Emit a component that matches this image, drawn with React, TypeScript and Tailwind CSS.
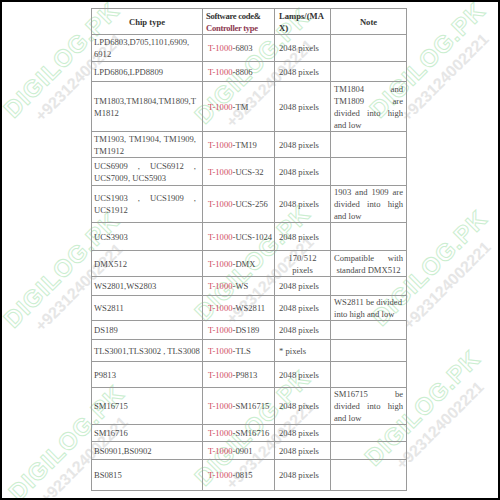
type Line = { t: string; j?: boolean; c?: boolean };

type Row = {
  h: string;
  chip: Line[];
  code: string;
  lamps: Line[];
  note?: Line[];
};

const px: Line[] = [{ t: "2048 pixels" }];

const rows: Row[] = [
  { h: "h-[27px]", chip: [{ t: "LPD6803,D705,1101,6909," }, { t: "6912" }], code: "6803", lamps: px },
  { h: "h-[20px]", chip: [{ t: "LPD6806,LPD8809" }], code: "8806", lamps: px },
  {
    h: "h-[50px]",
    chip: [{ t: "TM1803,TM1804,TM1809,T" }, { t: "M1812" }],
    code: "TM",
    lamps: px,
    note: [{ t: "TM1804 and", j: true }, { t: "TM1809 are", j: true }, { t: "divided into high", j: true }, { t: "and low" }],
  },
  { h: "h-[26px]", chip: [{ t: "TM1903, TM1904, TM1909,", j: true }, { t: "TM1912" }], code: "TM19", lamps: px },
  { h: "h-[28px]", chip: [{ t: "UCS6909 , UCS6912 ,", j: true }, { t: "UCS7009, UCS5903" }], code: "UCS-32", lamps: px },
  {
    h: "h-[37px]",
    chip: [{ t: "UCS1903 , UCS1909 ,", j: true }, { t: "UCS1912" }],
    code: "UCS-256",
    lamps: px,
    note: [{ t: "1903 and 1909 are", j: true }, { t: "divided into high", j: true }, { t: "and low" }],
  },
  { h: "h-[28px]", chip: [{ t: "UCS3903" }], code: "UCS-1024", lamps: px },
  {
    h: "h-[26px]",
    chip: [{ t: "DMX512" }],
    code: "DMX",
    lamps: [{ t: "170/512", c: true }, { t: "pixels", c: true }],
    note: [{ t: "Compatible with", j: true }, { t: "standard DMX512", c: true }],
  },
  { h: "h-[19px]", chip: [{ t: "WS2801,WS2803" }], code: "WS", lamps: px },
  {
    h: "h-[25px]",
    chip: [{ t: "WS2811" }],
    code: "WS2811",
    lamps: px,
    note: [{ t: "WS2811 be divided" }, { t: "into high and low" }],
  },
  { h: "h-[19px]", chip: [{ t: "DS189" }], code: "DS189", lamps: px },
  { h: "h-[22px]", chip: [{ t: "TLS3001,TLS3002 , TLS3008" }], code: "TLS", lamps: [{ t: "* pixels" }] },
  { h: "h-[26px]", chip: [{ t: "P9813" }], code: "P9813", lamps: px },
  {
    h: "h-[37px]",
    chip: [{ t: "SM16715" }],
    code: "SM16715",
    lamps: px,
    note: [{ t: "SM16715 be", j: true }, { t: "divided into high", j: true }, { t: "and low" }],
  },
  { h: "h-[17px]", chip: [{ t: "SM16716" }], code: "SM16716", lamps: px },
  { h: "h-[18px]", chip: [{ t: "BS0901,BS0902" }], code: "0901", lamps: px },
  { h: "h-[31px]", chip: [{ t: "BS0815" }], code: "0815", lamps: px },
];

function Lines({ lines }: { lines: Line[] }) {
  return (
    <>
      {lines.map((l, i) =>
        l.j ? (
          <div key={i} className="flex justify-between whitespace-nowrap">
            {l.t.split(" ").map((w, k) => (
              <span key={k}>{w}</span>
            ))}
          </div>
        ) : (
          <div key={i} className={l.c ? "text-center whitespace-nowrap" : "whitespace-nowrap"}>
            {l.t}
          </div>
        )
      )}
    </>
  );
}

// faint shop watermark, tiled 3x3 over the sheet
const marks = [
  { x: "left-[-33px]", y: "top-[42px]" },
  { x: "left-[158px]", y: "top-[48px]" },
  { x: "left-[333px]", y: "top-[42px]" },
  { x: "left-[-33px]", y: "top-[252px]" },
  { x: "left-[158px]", y: "top-[245px]" },
  { x: "left-[335px]", y: "top-[250px]" },
  { x: "left-[-28px]", y: "top-[425px]" },
  { x: "left-[158px]", y: "top-[410px]" },
  { x: "left-[328px]", y: "top-[390px]" },
];

function Watermark({ x, y }: { x: string; y: string }) {
  return (
    <div className={`pointer-events-none absolute ${x} ${y} flex w-[200px] -rotate-45 flex-col items-center`}>
      <div className="font-['Liberation_Sans',sans-serif] text-[24px] font-bold leading-[26px] tracking-[1px] text-transparent [-webkit-text-stroke:1px_#cbeed0]">
        DIGILOG.PK
      </div>
      <div className="mt-[3px] font-['Liberation_Sans',sans-serif] text-[16px] font-bold leading-[18px] text-[#e6e6e6]">
        +923124002221
      </div>
    </div>
  );
}

export default function App() {
  const cell = "border border-[#9a9a9a] align-middle";
  return (
    <div className="relative h-[500px] w-[500px] overflow-hidden border-2 border-black bg-white pl-[89px] pt-[6px] font-['Liberation_Serif',serif] text-[8.6px] leading-[12px] text-[#4a4a4a]">
      {marks.map((m, i) => (
        <Watermark key={i} x={m.x} y={m.y} />
      ))}
      <table className="relative z-10 w-[315px] table-fixed border-collapse">
        <colgroup>
          <col className="w-[111px]" />
          <col className="w-[72px]" />
          <col className="w-[56px]" />
          <col className="w-[76px]" />
        </colgroup>
        <thead>
          <tr className="h-[26px] font-bold text-[#333]">
            <td className={`${cell} text-center`}>Chip type</td>
            <td className={`${cell} pl-[3px] pr-[1px] tracking-[-0.3px]`}>
              <div className="whitespace-nowrap">Software code&amp;</div>
              <div className="whitespace-nowrap text-[#8e3a52]">Controller type</div>
            </td>
            <td className={`${cell} px-[4px]`}>
              <div>Lamps/(MA</div>
              <div>X)</div>
            </td>
            <td className={`${cell} text-center`}>Note</td>
          </tr>
        </thead>
        <tbody>
          {rows.map((r, i) => (
            <tr key={i} className={r.h}>
              <td className={`${cell} pl-[2px] pr-[6px]`}>
                <Lines lines={r.chip} />
              </td>
              <td className={`${cell} whitespace-nowrap pl-[5px]`}>
                <span className="text-[#cf4a62]">T-1000</span>-{r.code}
              </td>
              <td className={`${cell} px-[4px]`}>
                <Lines lines={r.lamps} />
              </td>
              <td className={`${cell} pl-[3px] pr-[3px]`}>{r.note && <Lines lines={r.note} />}</td>
            </tr>
          ))}
        </tbody>
      </table>
    </div>
  );
}
